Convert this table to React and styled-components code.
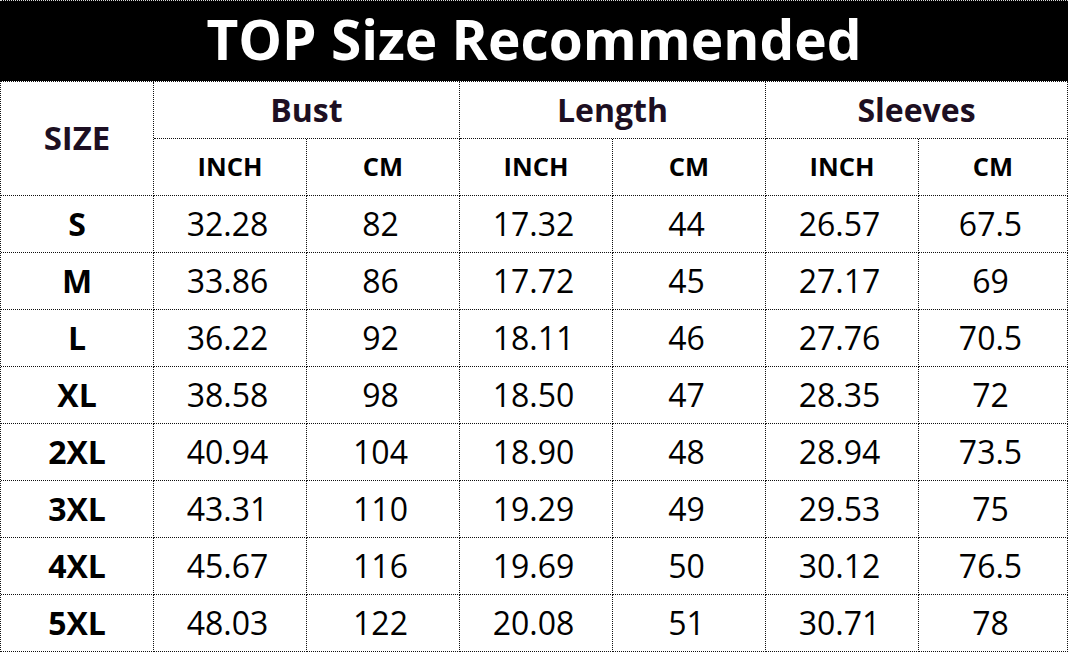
import React from "react";
import styled, { createGlobalStyle } from "styled-components";

const GlobalStyle = createGlobalStyle`
  body {
    margin: 0;
    background: #ffffff;
    font-family: "Open Sans", "Noto Sans", sans-serif;
  }
`;

const groups = ["Bust", "Length", "Sleeves"];

const rows = [
  ["S", "32.28", "82", "17.32", "44", "26.57", "67.5"],
  ["M", "33.86", "86", "17.72", "45", "27.17", "69"],
  ["L", "36.22", "92", "18.11", "46", "27.76", "70.5"],
  ["XL", "38.58", "98", "18.50", "47", "28.35", "72"],
  ["2XL", "40.94", "104", "18.90", "48", "28.94", "73.5"],
  ["3XL", "43.31", "110", "19.29", "49", "29.53", "75"],
  ["4XL", "45.67", "116", "19.69", "50", "30.12", "76.5"],
  ["5XL", "48.03", "122", "20.08", "51", "30.71", "78"],
];

const App = () => {
  return (
    <Page>
      <GlobalStyle />
      <Title>TOP Size Recommended</Title>
      <Chart>
        <Cell $rows={2} $size={33} $color="#1d0f22">
          SIZE
        </Cell>
        {groups.map((g) => (
          <Cell key={g} $cols={2} $size={32} $color="#1d0f22">
            {g}
          </Cell>
        ))}
        {groups.map((g) => (
          <React.Fragment key={g + "-units"}>
            <Cell $size={25.5}>INCH</Cell>
            <Cell $size={25.5}>CM</Cell>
          </React.Fragment>
        ))}
        {rows.map((r) => (
          <React.Fragment key={r[0]}>
            <Cell $size={32}>{r[0]}</Cell>
            {r.slice(1).map((v, i) => (
              <Value key={i}>{v}</Value>
            ))}
          </React.Fragment>
        ))}
      </Chart>
    </Page>
  );
};

const Page = styled.div`
  width: 1068px;
  height: 652px;
  overflow: hidden;
`;

const Title = styled.div`
  height: 81px;
  box-sizing: border-box;
  background: #000000;
  border-top: 1px dotted #d8d8d8;
  color: #ffffff;
  font-weight: 700;
  font-size: 55px;
  display: flex;
  align-items: center;
  justify-content: center;
  padding-bottom: 5px;
`;

const Chart = styled.div`
  display: grid;
  grid-template-columns: repeat(6, 153px) 149px;
  grid-auto-rows: 57px;
  border-top: 1px dotted #111;
  border-left: 1px dotted #111;
`;

const Cell = styled.div`
  grid-column: span ${(p) => p.$cols || 1};
  grid-row: span ${(p) => p.$rows || 1};
  border-right: 1px dotted #111;
  border-bottom: 1px dotted #111;
  display: flex;
  align-items: center;
  justify-content: center;
  font-weight: 700;
  font-size: ${(p) => p.$size}px;
  color: ${(p) => p.$color || "#000"};
  padding-bottom: 2px;
`;

const Value = styled(Cell)`
  font-weight: 400;
  font-size: 32px;
  color: #000;
  padding-right: 5px;
`;

export default App;
